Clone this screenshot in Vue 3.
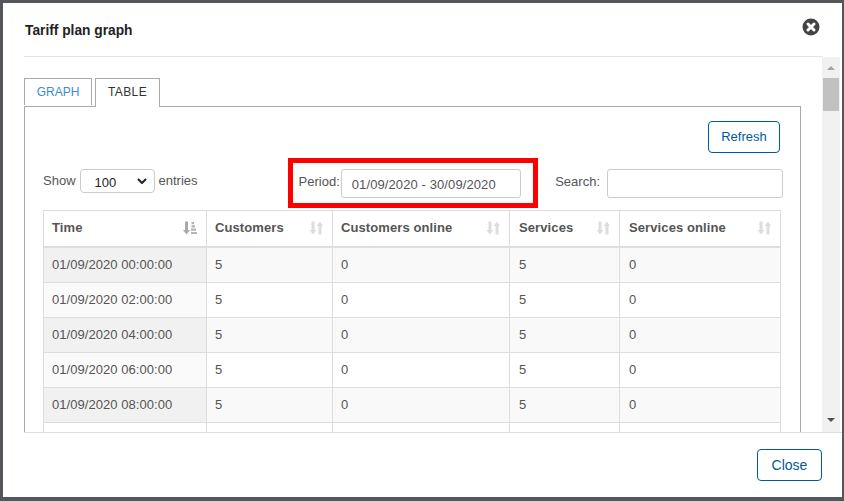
<template>
  <div class="backdrop">
    <div class="modal">
      <header class="modal-header">
        <h4 class="title">Tariff plan graph</h4>
        <svg class="close-icon" viewBox="0 0 18 18" width="18" height="18">
          <circle cx="9" cy="9" r="8.5" fill="#444" />
          <path d="M6 6l6 6M12 6l-6 6" stroke="#fff" stroke-width="3" stroke-linecap="round" />
        </svg>
      </header>

      <div class="modal-body">
        <div class="scroll-area">
          <ul class="tabs">
            <li class="tab">GRAPH</li>
            <li class="tab active">TABLE</li>
          </ul>
          <div class="panel">
            <div class="toolbar">
              <button class="btn refresh">Refresh</button>
            </div>

            <div class="filters">
              <label class="length">
                Show
                <span class="select-wrap">
                  <select class="length-select">
                    <option>100</option>
                  </select>
                  <svg class="chevron" viewBox="0 0 10 6" width="10" height="6">
                    <path d="M1 1l4 4 4-4" fill="none" stroke="#222" stroke-width="2" />
                  </svg>
                </span>
                entries
              </label>
              <label class="period">
                Period:
                <input class="field period-input" value="01/09/2020 - 30/09/2020" />
              </label>
              <label class="search">
                Search:
                <input class="field search-input" />
              </label>
              <div class="annotation"></div>
            </div>

            <table class="grid">
              <colgroup>
                <col v-for="col in columns" :key="col.label" :style="{ width: col.width + 'px' }" />
              </colgroup>
              <thead>
                <tr>
                  <th v-for="(col, i) in columns" :key="col.label">
                    <div class="th-inner">
                      <span>{{ col.label }}</span>
                      <svg class="sort-icon" viewBox="0 0 14 14" width="14" height="14">
                        <template v-if="i === 0">
                          <path d="M2 .5h3v8.500h2L3.500 13.500 0 9h2z" fill="#aaa" />
                          <path d="M8.500 1h2.500v2.200H8.500zM8.500 4.300h3.500v2.200H8.500zM8 7.600h5v2.200H8zM8 10.900h6v2.200H8z" fill="#b4b4b4" />
                        </template>
                        <template v-else>
                          <path d="M2.500 .5h3v8.500h2L4 13.500 .5 9h2z" fill="#ddd" />
                          <path d="M9.500 13.500h3V5h1.500L11 .5 7.500 5h2z" fill="#ddd" />
                        </template>
                      </svg>
                    </div>
                  </th>
                </tr>
              </thead>
              <tbody>
                <tr v-for="row in rows" :key="row.time">
                  <td class="sorted">{{ row.time }}</td>
                  <td>{{ row.customers }}</td>
                  <td>{{ row.online }}</td>
                  <td>{{ row.services }}</td>
                  <td>{{ row.servicesOnline }}</td>
                </tr>
                <!-- next row only peeks out above the fold -->
                <tr>
                  <td class="sorted"></td>
                  <td></td>
                  <td></td>
                  <td></td>
                  <td></td>
                </tr>
              </tbody>
            </table>
          </div>
        </div>

        <div class="scrollbar">
          <span class="arrow up"></span>
          <div class="track"><div class="thumb"></div></div>
          <span class="arrow down"></span>
        </div>
      </div>

      <footer class="modal-footer">
        <button class="btn close">Close</button>
      </footer>
    </div>
  </div>
</template>

<script setup>
const columns = [
  { label: 'Time', width: 163 },
  { label: 'Customers', width: 126 },
  { label: 'Customers online', width: 177 },
  { label: 'Services', width: 110 },
  { label: 'Services online', width: 161 }
]

const rows = ['00', '02', '04', '06', '08'].map((h) => ({
  time: `01/09/2020 ${h}:00:00`,
  customers: 5,
  online: 0,
  services: 5,
  servicesOnline: 0
}))
</script>

<style>
html, body {
  margin: 0;
  background: #54575b;
}
</style>

<style scoped>
.backdrop {
  width: 844px;
  height: 501px;
  box-sizing: border-box;
  padding: 3px 2px 4px 3px;
  background: #54575b;
  font-family: "Liberation Sans", Arial, sans-serif;
  font-size: 13px;
  color: #555;
  overflow: hidden;
}

.modal {
  height: 100%;
  background: #fff;
  display: flex;
  flex-direction: column;
}

.modal-header {
  flex: none;
  height: 54px;
  margin-left: 21px;
  margin-right: 19px;
  box-sizing: border-box;
  border-bottom: 1px solid #e5e5e5;
  display: flex;
  justify-content: space-between;
  align-items: flex-start;
}

.title {
  margin: 20px 0 0 1px;
  font-size: 13.75px;
  line-height: 15px;
  font-weight: 700;
  color: #222;
}

.close-icon {
  margin-top: 15px;
  margin-right: 3px;
}

.modal-body {
  flex: none;
  height: 375px;
  margin-left: 21px;
  display: flex;
  border-bottom: 1px solid #ddd;
}

.scroll-area {
  width: 798px;
  height: 375px;
  overflow: hidden;
  box-sizing: border-box;
  padding: 21px 21px 0 0;
}

.scrollbar {
  width: 18px;
  height: 375px;
  background: #f1f1f1;
  box-sizing: border-box;
  padding: 0 1px;
  display: flex;
  flex-direction: column;
  align-items: center;
}

.track {
  flex: 1;
  width: 100%;
}

.thumb {
  width: 100%;
  height: 33px;
  background: #c1c1c1;
}

.arrow {
  flex: none;
  display: block;
  width: 0;
  height: 0;
  border-left: 4px solid transparent;
  border-right: 4px solid transparent;
}

.arrow.up {
  margin: 9px 0 8px;
  border-bottom: 4px solid #a3a3a3;
}

.arrow.down {
  margin: 5px 0 10px;
  border-top: 4px solid #505050;
}

.tabs {
  list-style: none;
  margin: 0;
  padding: 0;
  display: flex;
  gap: 3px;
  height: 28px;
}

.tab {
  width: 68px;
  height: 27px;
  box-sizing: border-box;
  border: 1px solid #aaa;
  border-bottom: 0;
  color: #428bca;
  font-size: 12px;
  line-height: 26px;
  text-align: center;
}

.tab.active {
  position: relative;
  width: 65px;
  height: 29px;
  background: #fff;
  color: #333;
  letter-spacing: 0.4px;
  z-index: 1;
}

.panel {
  border: 1px solid #aaa;
  border-bottom: 0;
  padding: 14px 19px 0 18px;
  height: 400px;
  box-sizing: border-box;
}

.toolbar {
  display: flex;
  justify-content: flex-end;
}

.btn {
  height: 32px;
  box-sizing: border-box;
  padding: 0 0 2px;
  background: #fff;
  border: 1px solid #005a9e;
  border-radius: 4px;
  color: #005a9e;
  font-family: inherit;
  font-size: 14px;
}

.btn.refresh {
  width: 72px;
  margin-right: 1px;
  font-size: 13px;
}

.btn.close {
  width: 65px;
  padding-bottom: 0;
}

.filters {
  position: relative;
  display: flex;
  align-items: flex-start;
  margin-top: 16px;
  margin-right: -2px;
  height: 41px;
}

.length {
  display: flex;
  align-items: flex-start;
  line-height: 23px;
  gap: 4px;
}

.select-wrap {
  position: relative;
  display: block;
  height: 24px;
}

.length-select {
  display: block;
  appearance: none;
  width: 75px;
  height: 24px;
  box-sizing: border-box;
  padding: 2px 0 0 14px;
  margin: 0;
  background: #fff;
  border: 1px solid #ccc;
  border-radius: 4px;
  color: #222;
  font-family: inherit;
  font-size: 13px;
}

.chevron {
  position: absolute;
  left: 57px;
  top: 9px;
  pointer-events: none;
}

.period {
  display: flex;
  align-items: flex-start;
  line-height: 26px;
  gap: 1px;
  margin-left: 101px;
}

.period-input {
  width: 180px;
  padding: 1px 0 0 10px;
}

.search {
  display: flex;
  align-items: flex-start;
  line-height: 26px;
  gap: 7px;
  margin-left: auto;
}

.search-input {
  width: 176px;
}

.field {
  height: 29px;
  box-sizing: border-box;
  margin: 0;
  background: #fff;
  border: 1px solid #ccc;
  border-radius: 3px;
  color: #555;
  font-family: inherit;
  font-size: 13px;
  line-height: normal;
  letter-spacing: 0.1px;
}

.annotation {
  position: absolute;
  left: 245px;
  top: -11px;
  width: 250px;
  height: 50px;
  box-sizing: border-box;
  border: 5px solid #f00;
  pointer-events: none;
}

.grid {
  table-layout: fixed;
  width: 737px;
  border-collapse: collapse;
  border-top: 1px solid #ddd;
  border-left: 1px solid #ddd;
  border-right: 1px solid #ddd;
}

th {
  height: 33px;
  padding: 0 9px 2px 8px;
  border-right: 1px solid #ddd;
  border-bottom: 2px solid #ddd;
  text-align: left;
  font-size: 13px;
  letter-spacing: 0.1px;
  color: #555;
}

.th-inner {
  display: flex;
  justify-content: space-between;
  align-items: center;
}

.sort-icon {
  flex: none;
}

td {
  height: 32px;
  padding: 0 8px 2px;
  border-right: 1px solid #ddd;
  border-bottom: 1px solid #ddd;
  font-size: 13px;
  letter-spacing: 0.05px;
  color: #555;
}

th:nth-child(4),
td:nth-child(4),
th:nth-child(5),
td:nth-child(5) {
  padding-left: 9px;
}

tbody tr:nth-child(odd) td {
  background: #f9f9f9;
}

tbody tr:nth-child(odd) td.sorted {
  background: #f1f1f1;
}

tbody tr:nth-child(even) td.sorted {
  background: #fafafa;
}

tbody tr:last-child td,
tbody tr:last-child td.sorted {
  background: #fff;
}

.modal-footer {
  flex: 1;
  display: flex;
  justify-content: flex-end;
  align-items: flex-start;
  padding: 16px 20px 0 0;
}
</style>
